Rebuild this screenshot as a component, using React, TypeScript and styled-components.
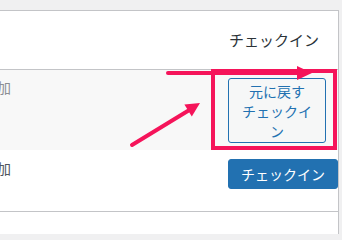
import React from 'react';
import styled, { createGlobalStyle } from 'styled-components';

const GlobalStyle = createGlobalStyle`
  html, body {
    margin: 0;
    padding: 0;
    background: #f0f0f1;
    overflow: hidden;
  }
  body {
    font-family: "Noto Sans CJK JP", "Noto Sans", sans-serif;
    color: #2c3338;
  }
`;

const Page = styled.div`
  position: relative;
  width: 342px;
  height: 234px;
  box-sizing: border-box;
  padding: 10px 3px 0 0;
  overflow: hidden;
`;

const Panel = styled.div`
  margin-left: -28px;
  background: #fff;
  border: 1px solid #c3c4c7;
  border-bottom: none;
`;

const Row = styled.div<{ $striped?: boolean; $height: number; $padTop: number; $center?: boolean; $noLine?: boolean }>`
  display: flex;
  align-items: ${(p) => (p.$center ? 'center' : 'flex-start')};
  box-sizing: border-box;
  height: ${(p) => p.$height}px;
  padding-top: ${(p) => p.$padTop}px;
  background: ${(p) => (p.$striped ? '#f8f8f8' : '#fff')};
  border-bottom: ${(p) => (p.$noLine ? 'none' : '1px solid #c3c4c7')};
`;

const NameCell = styled.div<{ $muted?: boolean }>`
  flex: 1;
  min-width: 0;
  padding-left: 10px;
  font-size: 14px;
  line-height: 18px;
  color: ${(p) => (p.$muted ? '#8c8f94' : '#50575e')};
  white-space: nowrap;
  overflow: hidden;
`;

const ActionCell = styled.div`
  width: 98px;
  padding-right: 12px;
  flex-shrink: 0;
`;

const ColumnTitle = styled.div`
  padding-left: 1px;
  font-size: 15px;
  line-height: 20px;
  color: #2c3338;
  white-space: nowrap;
`;

const Button = styled.button<{ $primary?: boolean }>`
  display: block;
  box-sizing: border-box;
  margin: 0;
  font-family: inherit;
  font-size: 14px;
  border-radius: 3px;
  border: 1px solid #2271b1;
  cursor: pointer;
  ${(p) =>
    p.$primary
      ? `
    background: #2271b1;
    color: #fff;
    height: 30px;
    padding: 0 12px;
    line-height: 28px;
    white-space: nowrap;
  `
      : `
    width: 98px;
    background: #f6f7f7;
    color: #2271b1;
    padding: 2px 10px 1px;
    line-height: 20px;
    text-align: center;
  `}
`;

const Overlay = styled.svg`
  position: absolute;
  left: 0;
  top: 0;
  pointer-events: none;
`;

const MARK = '#f5145a';

function Annotations() {
  return (
    <Overlay width="342" height="234" viewBox="0 0 342 234">
      <rect x="213" y="71" width="122" height="77" fill="none" stroke={MARK} strokeWidth="4" />
      <line x1="168" y1="73" x2="300" y2="73" stroke={MARK} strokeWidth="4" strokeLinecap="round" />
      <polygon points="312,73 297,66 297,80" fill={MARK} />
      <line x1="132" y1="145" x2="191" y2="109" stroke={MARK} strokeWidth="4" strokeLinecap="round" />
      <polygon points="200,103 191.8,116.4 184.4,104.4" fill={MARK} />
    </Overlay>
  );
}

export default function App() {
  return (
    <>
      <GlobalStyle />
      <Page>
        <Panel>
          <Row $height={59} $padTop={0} $center>
            <NameCell />
            <ActionCell>
              <ColumnTitle>チェックイン</ColumnTitle>
            </ActionCell>
          </Row>
          <Row $striped $noLine $height={80} $padTop={8}>
            <NameCell $muted>参加</NameCell>
            <ActionCell>
              <Button>
                元に戻す
                <br />
                チェックイン
              </Button>
            </ActionCell>
          </Row>
          <Row $height={62} $padTop={9}>
            <NameCell>参加</NameCell>
            <ActionCell>
              <Button $primary>チェックイン</Button>
            </ActionCell>
          </Row>
          <Row $height={40} $padTop={19}>
            <NameCell />
            <ActionCell>
              <ColumnTitle>チェックイン</ColumnTitle>
            </ActionCell>
          </Row>
        </Panel>
        <Annotations />
      </Page>
    </>
  );
}
